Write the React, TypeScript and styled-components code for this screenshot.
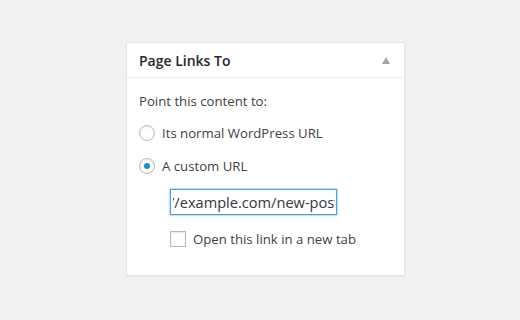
import React from "react";
import styled, { createGlobalStyle } from "styled-components";

const Global = createGlobalStyle`
  html, body { margin: 0; padding: 0; background: #f1f1f1; }
  body { font-family: "Open Sans", "Liberation Sans", sans-serif; color: #3f3f3f; }
`;

const Page = styled.div`
  width: 520px;
  height: 320px;
  display: flex;
  justify-content: center;
  padding-top: 42px;
  box-sizing: border-box;
`;

const Box = styled.div`
  width: 279px;
  height: 234px;
  box-sizing: border-box;
  background: #fff;
  border: 1px solid #e5e5e5;
  box-shadow: 0 1px 1px rgba(0, 0, 0, 0.04);
  margin-left: 11px;
`;

const Header = styled.div`
  height: 34px;
  display: flex;
  align-items: center;
  justify-content: space-between;
  padding: 0 14px 0 12px;
  border-bottom: 1px solid #eee;
`;

const Title = styled.h2`
  margin: 0;
  font-size: 14px;
  font-weight: 600;
  color: #23282d;
`;

const Toggle = styled.span`
  width: 0;
  height: 0;
  border-left: 4px solid transparent;
  border-right: 4px solid transparent;
  border-bottom: 7px solid #a0a5aa;
`;

const Body = styled.div`
  padding: 13px 12px 0 12px;
  display: flex;
  flex-direction: column;
  font-size: 13.2px;
`;

const Label = styled.p`
  margin: 0;
  line-height: 20px;
`;

const Option = styled.label<{ $top: number }>`
  display: flex;
  align-items: center;
  gap: 7px;
  margin-top: ${(p) => p.$top}px;
  line-height: 20px;
`;

const Radio = styled.span<{ $checked?: boolean }>`
  width: 16px;
  height: 16px;
  box-sizing: border-box;
  border-radius: 50%;
  border: 1px solid #b4b9be;
  box-shadow: inset 0 1px 2px rgba(0, 0, 0, 0.07);
  display: flex;
  align-items: center;
  justify-content: center;
  &::after {
    content: "";
    display: ${(p) => (p.$checked ? "block" : "none")};
    width: 6px;
    height: 6px;
    border-radius: 50%;
    background: #1e8cbe;
  }
`;

const Indent = styled.div`
  padding-left: 31px;
  display: flex;
  flex-direction: column;
`;

const UrlInput = styled.input`
  margin-top: 13px;
  width: 167px;
  height: 26px;
  box-sizing: border-box;
  border: 1px solid #5b9dd9;
  box-shadow: 0 0 2px rgba(30, 140, 190, 0.8);
  outline: none;
  padding: 0 1px 0 2px;
  text-indent: -4px;
  font-family: "Open Sans", "Liberation Sans", sans-serif;
  font-size: 14.6px;
  color: #32373c;
  background: #fff;
`;

const Check = styled.span`
  width: 16px;
  height: 16px;
  box-sizing: border-box;
  border: 1px solid #b4b9be;
  box-shadow: inset 0 1px 2px rgba(0, 0, 0, 0.1);
  background: #fff;
`;

export default function App() {
  return (
    <>
      <Global />
      <Page>
        <Box>
          <Header>
            <Title>Page Links To</Title>
            <Toggle />
          </Header>
          <Body>
            <Label>Point this content to:</Label>
            <Option $top={12}>
              <Radio />
              Its normal WordPress URL
            </Option>
            <Option $top={13}>
              <Radio $checked />
              A custom URL
            </Option>
            <Indent>
              <UrlInput readOnly value="//example.com/new-post" />
              <Option $top={14}>
                <Check />
                Open this link in a new tab
              </Option>
            </Indent>
          </Body>
        </Box>
      </Page>
    </>
  );
}
